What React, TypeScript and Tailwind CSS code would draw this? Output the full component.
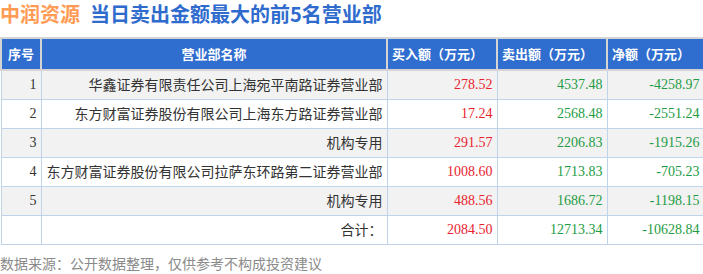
const rows = [
  { no: "1", name: "华鑫证券有限责任公司上海宛平南路证券营业部", buy: "278.52", sell: "4537.48", net: "-4258.97" },
  { no: "2", name: "东方财富证券股份有限公司上海东方路证券营业部", buy: "17.24", sell: "2568.48", net: "-2551.24" },
  { no: "3", name: "机构专用", buy: "291.57", sell: "2206.83", net: "-1915.26" },
  { no: "4", name: "东方财富证券股份有限公司拉萨东环路第二证券营业部", buy: "1008.60", sell: "1713.83", net: "-705.23" },
  { no: "5", name: "机构专用", buy: "488.56", sell: "1686.72", net: "-1198.15" },
];

const cjk = "font-['Noto_Sans_CJK_SC','Noto_Sans',sans-serif]";
const serif = "font-['Liberation_Serif','Times_New_Roman',serif]";

export default function App() {
  return (
    <div className={`relative w-[703px] h-[274px] overflow-hidden bg-white ${cjk}`}>
      <div className="h-[37px] flex items-start text-[20px] font-bold leading-[28px] whitespace-nowrap">
        <span className="text-[#ff9b55]">中润资源</span>
        <span className="ml-[10px] text-[#2f6bcd]">当日卖出金额最大的前5名营业部</span>
      </div>

      <table className="table-fixed w-[703px] border-collapse text-[14px]">
        <colgroup>
          <col className="w-[40px]" />
          <col className="w-[346px]" />
          <col className="w-[110px]" />
          <col className="w-[110px]" />
          <col className="w-[97px]" />
        </colgroup>
        <thead>
          <tr className="h-[32px] bg-[#2f6dcf] text-white text-[13px] font-bold">
            <th className="border-2 border-[#d4d4d4] text-center p-0">序号</th>
            <th className="border-2 border-[#d4d4d4] text-center p-0">营业部名称</th>
            <th className="border-2 border-[#d4d4d4] text-left pl-[4px] p-0">买入额（万元）</th>
            <th className="border-2 border-[#d4d4d4] text-left pl-[4px] p-0">卖出额（万元）</th>
            <th className="border-2 border-[#d4d4d4] text-left pl-[4px] p-0">净额（万元）</th>
          </tr>
        </thead>
        <tbody>
          {rows.map((r, i) => (
            <tr key={r.no} className={`h-[29px] ${i % 2 === 0 ? "bg-[#f2f2f2]" : "bg-white"}`}>
              <td className={`border border-[#bfd3ea] text-right pr-[4px] text-[#333] ${serif}`}>{r.no}</td>
              <td className="border border-[#bfd3ea] text-right pr-[4px] text-[#333] whitespace-nowrap">{r.name}</td>
              <td className={`border border-[#bfd3ea] text-right pr-[4px] text-[#e8232f] ${serif}`}>{r.buy}</td>
              <td className={`border border-[#bfd3ea] text-right pr-[4px] text-[#1e9c45] ${serif}`}>{r.sell}</td>
              <td className={`border border-[#bfd3ea] text-right pr-[4px] text-[#1e9c45] ${serif}`}>{r.net}</td>
            </tr>
          ))}
          <tr className="h-[29px] bg-white">
            <td className="border border-[#bfd3ea]"></td>
            <td className="border border-[#bfd3ea] text-right pr-[4px] text-[#333]">合计：</td>
            <td className={`border border-[#bfd3ea] text-right pr-[4px] text-[#e8232f] ${serif}`}>2084.50</td>
            <td className={`border border-[#bfd3ea] text-right pr-[4px] text-[#1e9c45] ${serif}`}>12713.34</td>
            <td className={`border border-[#bfd3ea] text-right pr-[4px] text-[#1e9c45] ${serif}`}>-10628.84</td>
          </tr>
        </tbody>
      </table>

      <div className="mt-[8px] text-[14px] leading-[20px] text-[#8a8a8a] whitespace-nowrap">
        数据来源：公开数据整理，仅供参考不构成投资建议
      </div>
    </div>
  );
}
